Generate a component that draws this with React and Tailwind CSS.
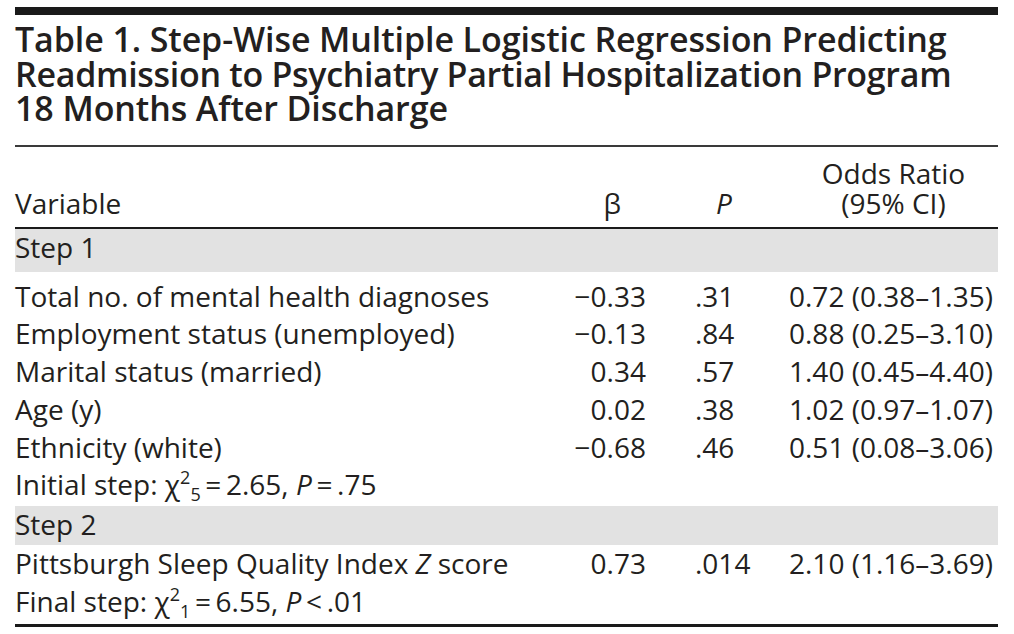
import React from 'react'

const rows = [
  ['Total no. of mental health diagnoses', '\u22120.33', '.31', '0.72 (0.38\u20131.35)'],
  ['Employment status (unemployed)', '\u22120.13', '.84', '0.88 (0.25\u20133.10)'],
  ['Marital status (married)', '0.34', '.57', '1.40 (0.45\u20134.40)'],
  ['Age (y)', '0.02', '.38', '1.02 (0.97\u20131.07)'],
  ['Ethnicity (white)', '\u22120.68', '.46', '0.51 (0.08\u20133.06)'],
]

const cols = 'grid grid-cols-[543px_100px_95px_245px]'

const Row = ({ label, beta, p, or }) => (
  <div className={`${cols} h-[37.8px] leading-[37.8px]`}>
    <div className="whitespace-nowrap">{label}</div>
    <div className="text-right pr-[12px]">{beta}</div>
    <div className="pl-[37px]">{p}</div>
    <div className="pl-[36px] whitespace-nowrap">{or}</div>
  </div>
)

const Chi = ({ sup, sub }) => (
  <>
    {'\u03c7'}
    <span className="text-[18px] relative top-[-11px]">{sup}</span>
    <span className="text-[18px] relative top-[6px]">{sub}</span>
  </>
)

export default function App() {
  return (
    <div className="w-[1014px] h-[634px] bg-white text-[#231f20] font-['Open_Sans',sans-serif] px-[15px] pt-[7px] overflow-hidden">
      <div className="w-[983px]">
        <div className="h-[8px] bg-[#1a1a1a]"></div>

        <h1 className="mt-[7px] text-[34px] leading-[34.5px] font-semibold whitespace-nowrap">
          <span className="tracking-[-0.1px]">Table 1. Step-Wise Multiple Logistic Regression Predicting</span>
          <br />
          <span className="tracking-[-0.3px]">Readmission to Psychiatry Partial Hospitalization Program</span>
          <br />
          <span className="tracking-[-0.1px]">18 Months After Discharge</span>
        </h1>

        <div className="mt-[19px] h-[2px] bg-[#3a3a3a]"></div>

        <div className="text-[28px]">
          {/* header */}
          <div className={`${cols} h-[80px] items-end pb-[9px] leading-[30px]`}>
            <div>Variable</div>
            <div className="text-right pr-[37px]">{'\u03b2'}</div>
            <div className="pl-[37px] text-center italic">P</div>
            <div className="pl-[36px] text-center">
              Odds Ratio
              <br />
              (95% CI)
            </div>
          </div>
          <div className="h-[2px] bg-[#1a1a1a]"></div>

          <div className="h-[43px] leading-[36px] bg-[#e2e2e2]">Step 1</div>

          <div className="pt-[6px]">
            {rows.map((r) => (
              <Row key={r[0]} label={r[0]} beta={r[1]} p={r[2]} or={r[3]} />
            ))}
            <div className="h-[37.8px] leading-[37.8px] whitespace-nowrap">
              Initial step: <Chi sup="2" sub="5" />
              {'\u2009=\u20092.65, '}
              <i>P</i>
              {'\u2009=\u2009.75'}
            </div>
          </div>

          <div className="mt-[2px] h-[39px] leading-[36px] bg-[#e2e2e2]">Step 2</div>

          <Row
            label={
              <>
                Pittsburgh Sleep Quality Index <i>Z</i> score
              </>
            }
            beta="0.73"
            p=".014"
            or={'2.10 (1.16\u20133.69)'}
          />
          <div className="h-[37.8px] leading-[37.8px] whitespace-nowrap">
            Final step: <Chi sup="2" sub="1" />
            {'\u2009=\u20096.55, '}
            <i>P</i>
            {'\u2009<\u2009.01'}
          </div>

          <div className="mt-[3px] h-[3px] bg-[#1a1a1a]"></div>
        </div>
      </div>
    </div>
  )
}
